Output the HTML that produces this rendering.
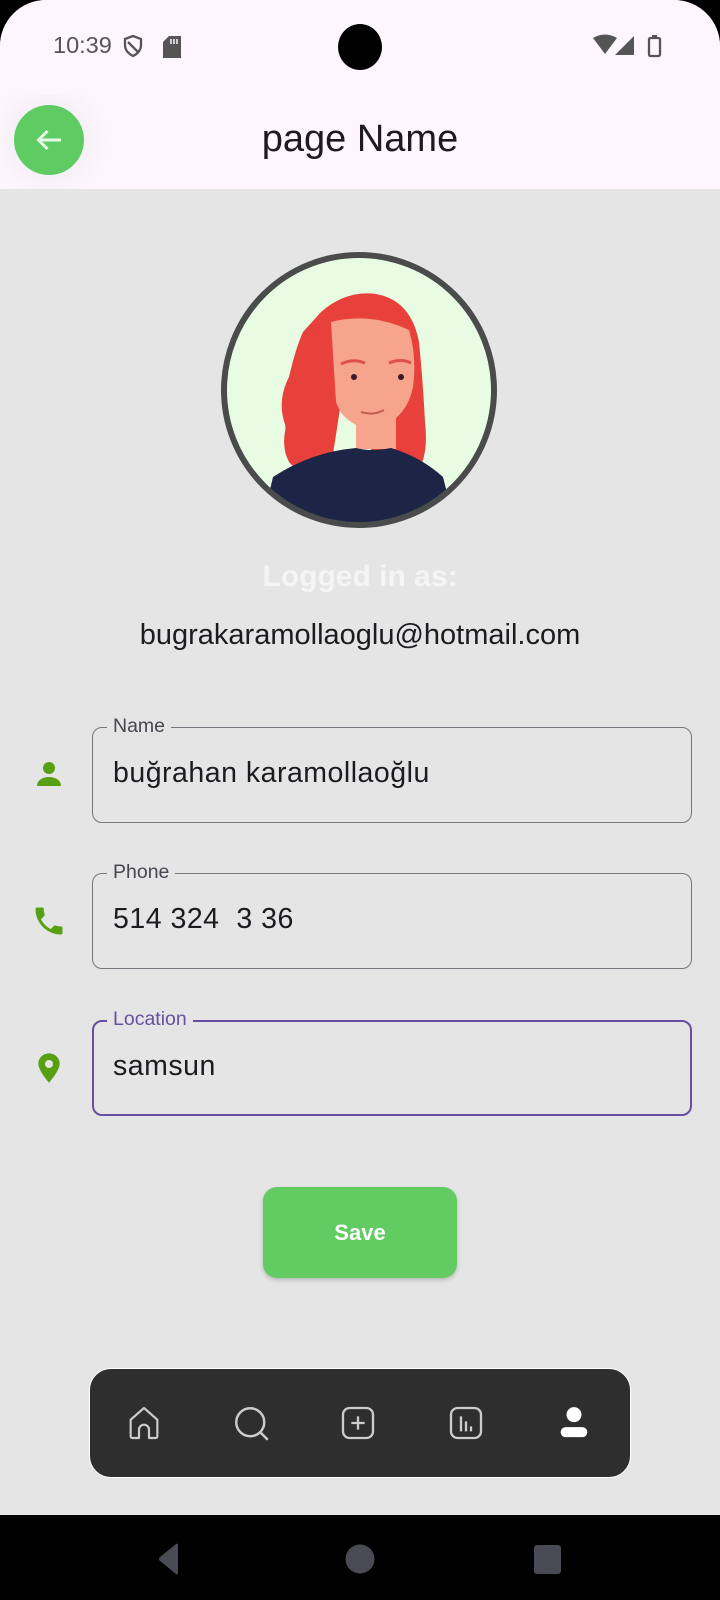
<!DOCTYPE html>
<html><head><meta charset="utf-8"><style>
*{margin:0;padding:0;box-sizing:border-box}
body{width:720px;height:1600px;background:#000;font-family:"Liberation Sans",Roboto,sans-serif;overflow:hidden;position:relative}
.screen{position:absolute;left:0;top:0;width:720px;height:1515px;background:#e5e5e5;border-radius:46px 46px 0 0;overflow:hidden}
.top{position:absolute;left:0;top:0;width:720px;height:189px;background:#fdf7fd}
.abs{position:absolute}
.field{position:absolute;left:92px;width:600px;height:96px;border:1.5px solid #79747e;border-radius:10px}
.field .lbl{position:absolute;left:14px;top:-13px;background:#e5e5e5;padding:0 6px;font-size:19.5px;color:#49454f}
.field .val{position:absolute;left:20px;top:29px;font-size:28.5px;color:#1d1b20;letter-spacing:.5px}
</style></head><body>
<div class="screen">
<div class="top">
 <div class="abs" style="left:53px;top:32px;font-size:23.5px;color:#555">10:39</div>
 <svg class="abs" style="left:122px;top:34px" width="22" height="24" viewBox="0 0 22 24"><path d="M11 2L3 5v6c0 5 3.5 9 8 11 4.5-2 8-6 8-11V5z M6 8l10 10" fill="none" stroke="#555" stroke-width="2.3"/></svg>
 <svg class="abs" style="left:163px;top:36px" width="18" height="22"><path d="M6 0h12v22H0V6z" fill="#555"/><path d="M8 3v5M11 3v5M14 3v5" stroke="#fdf7fd" stroke-width="1.5"/></svg>
 <div class="abs" style="left:338px;top:24px;width:44px;height:46px;border-radius:50%;background:#000"></div>
 <svg class="abs" style="left:592px;top:34px" width="80" height="24"><path d="M1 4Q13-3 25 4L13 20z" fill="#555"/><path d="M42 2V21H23z" fill="#555"/><rect x="57" y="4" width="11" height="18" rx="1.5" fill="none" stroke="#555" stroke-width="2.3"/><rect x="60" y="1" width="5" height="3" fill="#555"/></svg>
 <div class="abs" style="left:0;top:95px;width:110px;height:94px;background:radial-gradient(circle at 49px 45px,rgba(0,0,0,.06),rgba(0,0,0,0) 60px)"></div>
 <div class="abs" style="left:14px;top:105px;width:70px;height:70px;border-radius:50%;background:#5fcb63"></div>
 <svg class="abs" style="left:31px;top:122px" width="36" height="36" viewBox="0 0 24 24"><path d="M20 12H5M11 6l-6 6 6 6" fill="none" stroke="#e8f8e8" stroke-width="2"/></svg>
 <div class="abs" style="left:0;width:720px;top:118px;text-align:center;font-size:38px;color:#1d1b20">page Name</div>
</div>
<svg class="abs" style="left:221px;top:252px" width="276" height="276" viewBox="0 0 276 276">
 <defs><clipPath id="c"><circle cx="138" cy="138" r="133"/></clipPath></defs>
 <circle cx="138" cy="138" r="133" fill="#e8fce4"/>
 <g clip-path="url(#c)">
  <path d="M100 60Q125 38 155 42Q190 48 198 90Q202 130 204 170Q208 205 195 222L150 210L150 120L120 150L110 215Q80 225 68 210Q60 195 65 175Q55 150 68 125Q75 95 82 80z" fill="#e8403a"/>
  <path d="M110 70Q150 60 188 78Q196 105 192 135Q185 170 150 178Q122 172 115 150z" fill="#f6a48c"/>
  <path d="M110 70Q95 110 102 160L90 200Q70 205 65 180Q60 150 75 120Q85 85 110 70z" fill="#e8403a"/>
  <rect x="135" y="165" width="40" height="32" fill="#f6a48c"/>
  <path d="M40 276L52 225Q90 200 135 196Q150 200 170 196Q200 205 222 225L235 276z" fill="#1c2545"/>
  <circle cx="133" cy="125" r="3" fill="#3a1a2a"/><circle cx="180" cy="125" r="3" fill="#3a1a2a"/>
  <path d="M120 112Q132 106 144 111M168 111Q180 106 190 111" stroke="#e0504a" stroke-width="3" fill="none"/>
  <path d="M140 160Q152 164 163 158" stroke="#c06050" stroke-width="2" fill="none"/>
 </g>
 <circle cx="138" cy="138" r="135" fill="none" stroke="#494c4a" stroke-width="6"/>
</svg>
<div class="abs" style="left:0;width:720px;top:560px;text-align:center;font-size:30px;font-weight:bold;color:#f5f5f5">Logged in as:</div>
<div class="abs" style="left:0;width:720px;top:619px;text-align:center;font-size:29px;color:#1d1b20">bugrakaramollaoglu@hotmail.com</div>

<svg class="abs" style="left:31px;top:756px" width="36" height="36" viewBox="0 0 24 24"><circle cx="12" cy="8" r="4" fill="#56a011"/><path d="M4 20c0-4 4-6 8-6s8 2 8 6z" fill="#56a011"/></svg>
<div class="field" style="top:727px"><div class="lbl">Name</div><div class="val">buğrahan karamollaoğlu</div></div>

<svg class="abs" style="left:31px;top:903px" width="36" height="36" viewBox="0 0 24 24"><path d="M6.6 10.8c1.4 2.8 3.8 5.1 6.6 6.6l2.2-2.2c.3-.3.7-.4 1-.2 1.1.4 2.3.6 3.6.6.6 0 1 .4 1 1V20c0 .6-.4 1-1 1C10.6 21 3 13.4 3 4c0-.6.4-1 1-1h3.5c.6 0 1 .4 1 1 0 1.3.2 2.5.6 3.6.1.3 0 .7-.2 1z" fill="#56a011"/></svg>
<div class="field" style="top:873px"><div class="lbl">Phone</div><div class="val">514 324&nbsp; 3 36</div></div>

<svg class="abs" style="left:33px;top:1050px" width="32" height="36" viewBox="0 0 24 26"><path d="M12 2C7.6 2 4 5.4 4 9.8 4 15 12 24 12 24s8-9 8-14.2C20 5.4 16.4 2 12 2z" fill="#56a011"/><circle cx="12" cy="10" r="3" fill="#e5e5e5"/></svg>
<div class="field" style="top:1020px;border:2.5px solid #6750a4"><div class="lbl" style="color:#6750a4;top:-14px;left:13px">Location</div><div class="val" style="top:28px;left:19px">samsun</div></div>

<div class="abs" style="left:263px;top:1187px;width:194px;height:91px;border-radius:14px;background:#62cc62;box-shadow:0 2px 4px rgba(0,0,0,.2);color:#fff;font-weight:bold;font-size:22px;text-align:center;line-height:91px">Save</div>

<div class="abs" style="left:89px;top:1368px;width:542px;height:110px;border-radius:22px;background:#2e2e2e;border:1.5px solid #fff">
 <svg class="abs" style="left:34px;top:34px" width="40" height="40" viewBox="0 0 24 24"><path d="M9 21V16a3 3 0 0 1 6 0v5h4a1 1 0 0 0 1-1V10L12 3 4 10v10a1 1 0 0 0 1 1z" fill="none" stroke="#ccc" stroke-width="1.3" stroke-linejoin="round"/></svg>
 <svg class="abs" style="left:141px;top:34px" width="42" height="42" viewBox="0 0 24 24"><circle cx="11" cy="11" r="8" fill="none" stroke="#ccc" stroke-width="1.4"/><path d="M17 17l4 4" stroke="#ccc" stroke-width="1.4"/></svg>
 <svg class="abs" style="left:248px;top:34px" width="40" height="40" viewBox="0 0 24 24"><rect x="3" y="3" width="18" height="18" rx="4" fill="none" stroke="#ccc" stroke-width="1.4"/><path d="M12 8v8M8 12h8" stroke="#ccc" stroke-width="1.4"/></svg>
 <svg class="abs" style="left:356px;top:34px" width="40" height="40" viewBox="0 0 24 24"><rect x="3" y="3" width="18" height="18" rx="4" fill="none" stroke="#ccc" stroke-width="1.4"/><path d="M9 8v9M12 11v6M15 14v3" stroke="#ccc" stroke-width="1.4"/></svg>
 <svg class="abs" style="left:464px;top:34px" width="40" height="40" viewBox="0 0 24 24"><circle cx="12" cy="7" r="4.5" fill="#fff"/><rect x="4" y="14.5" width="16" height="6" rx="3" fill="#fff"/></svg>
</div>
</div>
<svg class="abs" style="left:150px;top:1541px" width="420" height="36"><path d="M28 4L28 32Q28 34 26 33L10 20Q8 18 10 16L26 3Q28 2 28 4z" fill="#4a4a55"/><circle cx="210" cy="18" r="14.5" fill="#4a4a55"/><rect x="384" y="4" width="27" height="29" rx="3" fill="#4a4a55"/></svg>
</body></html>
